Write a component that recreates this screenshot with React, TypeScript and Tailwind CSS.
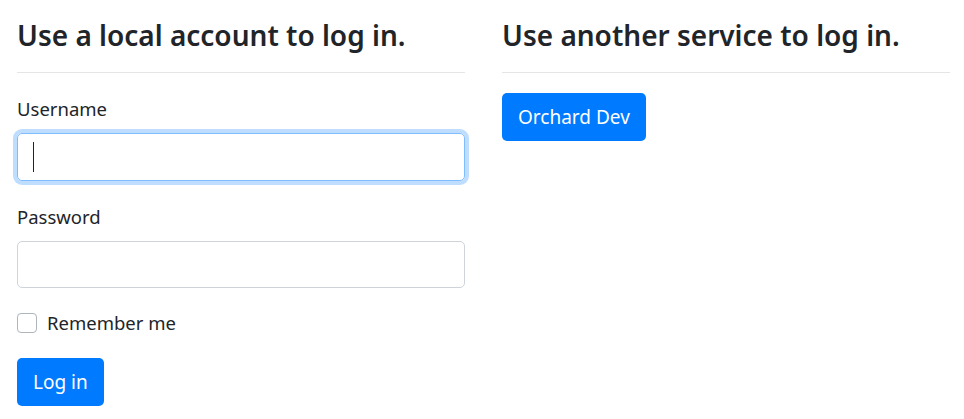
import React from "react";

const font = { fontFamily: '"Noto Sans", "Open Sans", sans-serif' };

export default function App() {
  return (
    <div className="bg-white w-[964px] h-[419px] overflow-hidden text-[#212529]" style={font}>
      <div className="grid grid-cols-[448px_448px] gap-x-[37px] pl-[17px]">
        <section>
          <h4 className="pt-[18px] text-[28px] leading-[34px] font-semibold text-[#212529] whitespace-nowrap">
            Use a local account to log in.
          </h4>
          <div className="mt-[20px] h-px bg-[#e5e5e5]" />
          <label className="block mt-[21px] text-[18.5px] leading-[30px]">Username</label>
          <div className="mt-[9px] h-[48px] rounded-[5px] border border-[#80bdff] shadow-[0_0_0_4px_rgba(0,123,255,0.25)] flex items-center pl-[15px]">
            <span className="w-px h-[30px] bg-[#222]" />
          </div>
          <label className="block mt-[21px] text-[18.5px] leading-[30px]">Password</label>
          <div className="mt-[9px] h-[47px] rounded-[5px] border border-[#ced4da]" />
          <div className="mt-[25px] flex items-center h-[20px]">
            <span className="w-[20px] h-[20px] rounded-[4px] border border-[#adb5bd] bg-white" />
            <span className="ml-[10px] text-[18.5px] leading-[30px]">Remember me</span>
          </div>
          <button className="mt-[25px] h-[48px] px-[16px] rounded-[5px] bg-[#007bff] text-white text-[19px] leading-[30px]">
            Log in
          </button>
        </section>
        <section>
          <h4 className="pt-[18px] text-[28px] leading-[34px] font-semibold text-[#212529] whitespace-nowrap">
            Use another service to log in.
          </h4>
          <div className="mt-[20px] h-px bg-[#e5e5e5]" />
          <button className="mt-[20px] h-[48px] px-[16px] rounded-[5px] bg-[#007bff] text-white text-[19px] leading-[30px]">
            Orchard Dev
          </button>
        </section>
      </div>
    </div>
  );
}
